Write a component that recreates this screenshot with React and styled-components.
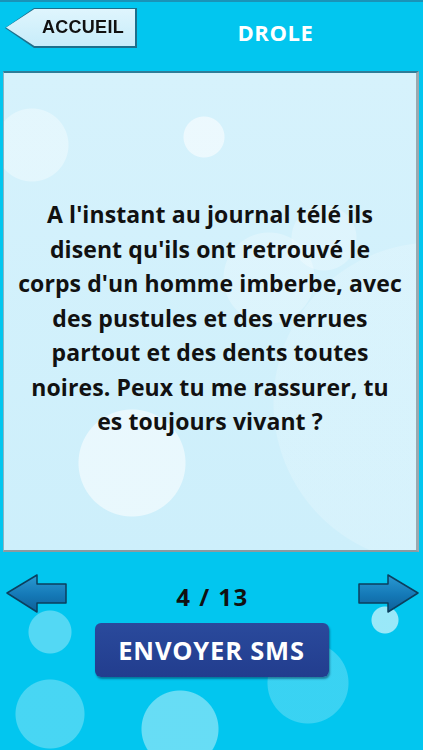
import React from 'react'
import styled, { createGlobalStyle } from 'styled-components'

const Global = createGlobalStyle`
  html, body { margin: 0; padding: 0; }
  body {
    width: 423px;
    height: 750px;
    overflow: hidden;
    font-family: "Open Sans", "DejaVu Sans", sans-serif;
  }
`

const Screen = styled.div`
  width: 423px;
  height: 750px;
  display: flex;
  flex-direction: column;
  background-color: #02c6ef;
  border-top: 2px solid #1a93b8;
  box-sizing: border-box;
  background-image:
    radial-gradient(circle at 50px 712px, rgba(255,255,255,0.28) 34px, transparent 35px),
    radial-gradient(circle at 50px 630px, rgba(255,255,255,0.32) 21px, transparent 22px),
    radial-gradient(circle at 180px 727px, rgba(255,255,255,0.4) 38px, transparent 39px),
    radial-gradient(circle at 308px 681px, rgba(255,255,255,0.22) 40px, transparent 41px),
    radial-gradient(circle at 385px 618px, rgba(255,255,255,0.6) 13px, transparent 14px);
`

const Header = styled.header`
  height: 69px;
  display: grid;
  grid-template-columns: 136px 1fr;
  align-items: start;
  padding: 6px 8px 0 0;
  box-sizing: border-box;
`

const BackButton = styled.button`
  margin-left: 5px;
  width: 132px;
  height: 40px;
  border: none;
  padding: 0;
  background: #1d6f8c;
  clip-path: polygon(0 50%, 22% 0, 100% 0, 100% 100%, 22% 100%);
  filter: drop-shadow(1px 2px 1px rgba(0,40,70,0.5));
  cursor: pointer;
  position: relative;
`

const BackFace = styled.span`
  position: absolute;
  inset: 1px 2px 2px 1px;
  background: linear-gradient(#dff5fd, #c7ecfa);
  clip-path: polygon(0 50%, 22% 0, 100% 0, 100% 100%, 22% 100%);
  display: flex;
  align-items: center;
  justify-content: flex-end;
  padding-right: 11px;
  font-family: inherit;
  font-weight: 700;
  font-size: 18px;
  color: #111;
  letter-spacing: 0.3px;
`

const Title = styled.h1`
  margin: 0;
  padding-top: 9px;
  text-align: center;
  color: #fff;
  font-size: 22px;
  font-weight: 700;
  letter-spacing: 0.6px;
`

const Card = styled.main`
  margin: 0 4px 0 3px;
  height: 481px;
  box-sizing: border-box;
  border: 1px solid #8bb4c2;
  border-top: 2px solid #2f7d98;
  border-right: 3px solid #9aa9b0;
  border-bottom: 2px solid #8d9aa0;
  background-color: #d2f1fc;
  background-image:
    radial-gradient(circle at 28px 72px, rgba(255,255,255,0.35) 36px, transparent 37px),
    radial-gradient(circle at 200px 64px, rgba(255,255,255,0.55) 20px, transparent 21px),
    radial-gradient(circle at 128px 390px, rgba(255,255,255,0.55) 53px, transparent 54px),
    radial-gradient(circle at 430px 330px, rgba(255,255,255,0.18) 160px, transparent 161px),
    radial-gradient(circle at 320px 165px, rgba(255,255,255,0.25) 32px, transparent 33px),
    radial-gradient(circle at 265px 205px, rgba(255,255,255,0.25) 45px, transparent 46px),
    linear-gradient(#d6f2fc, #cdeffb);
  display: flex;
  align-items: center;
  justify-content: center;
`

const Quote = styled.p`
  margin: 13px 0 0;
  text-align: center;
  font-size: 23px;
  font-weight: 700;
  line-height: 34.5px;
  color: #111;
  white-space: nowrap;
  letter-spacing: 0.1px;
`

const Footer = styled.footer`
  flex: 1;
  display: flex;
  flex-direction: column;
  align-items: center;
`

const NavRow = styled.div`
  align-self: stretch;
  display: flex;
  align-items: center;
  justify-content: space-between;
  padding: 22px 4px 0 6px;
`

const ArrowButton = styled.button`
  width: 62px;
  height: 40px;
  padding: 0;
  border: none;
  background: none;
  cursor: pointer;
  svg { display: block; transform: ${p => (p.$right ? 'scaleX(-1)' : 'none')}; }
`

const Counter = styled.span`
  font-size: 24px;
  font-weight: 700;
  color: #111;
  letter-spacing: 1.5px;
  margin-top: 4px;
`

const SmsButton = styled.button`
  margin-top: 9px;
  width: 234px;
  height: 54px;
  border: none;
  border-radius: 6px;
  background: linear-gradient(#2a4a9c, #223d8e);
  box-shadow: 1px 2px 2px rgba(0,30,60,0.45);
  color: #fff;
  font-family: inherit;
  font-size: 25.5px;
  font-weight: 700;
  letter-spacing: 0.8px;
  cursor: pointer;
`

function Arrow() {
  return (
    <svg width="62" height="40" viewBox="0 0 62 40">
      <defs>
        <linearGradient id="ag" x1="0" y1="0" x2="0" y2="1">
          <stop offset="0" stopColor="#2a9ad3" />
          <stop offset="0.55" stopColor="#1478b6" />
          <stop offset="1" stopColor="#0e5f98" />
        </linearGradient>
      </defs>
      <path
        d="M1 19 L31 1 L31 10 L60 10 L60 29 L31 29 L31 38 Z"
        fill="url(#ag)"
        stroke="#0b3f5e"
        strokeWidth="1.5"
        strokeLinejoin="round"
      />
    </svg>
  )
}

export default function App() {
  return (
    <>
      <Global />
      <Screen>
        <Header>
          <BackButton>
            <BackFace>ACCUEIL</BackFace>
          </BackButton>
          <Title>DROLE</Title>
        </Header>
        <Card>
          <Quote>
            A l'instant au journal télé ils<br />
            disent qu'ils ont retrouvé le<br />
            corps d'un homme imberbe, avec<br />
            des pustules et des verrues<br />
            partout et des dents toutes<br />
            noires. Peux tu me rassurer, tu<br />
            es toujours vivant ?
          </Quote>
        </Card>
        <Footer>
          <NavRow>
            <ArrowButton aria-label="Précédent"><Arrow /></ArrowButton>
            <Counter>4 / 13</Counter>
            <ArrowButton $right aria-label="Suivant"><Arrow /></ArrowButton>
          </NavRow>
          <SmsButton>ENVOYER SMS</SmsButton>
        </Footer>
      </Screen>
    </>
  )
}
